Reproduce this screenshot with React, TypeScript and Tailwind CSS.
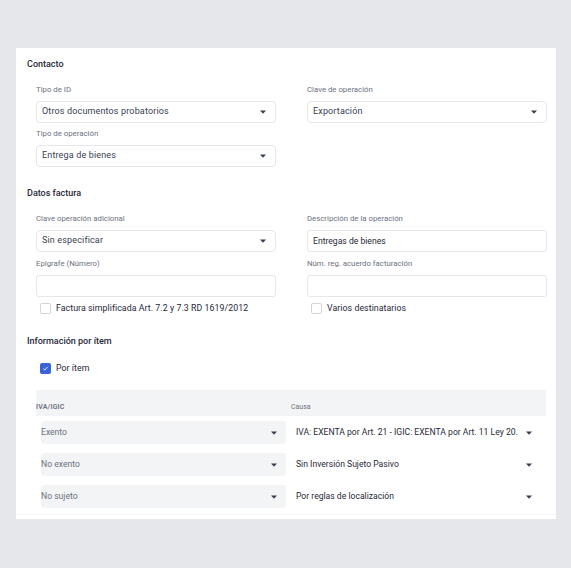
import React from 'react';

const font = { fontFamily: 'Roboto, "Liberation Sans", sans-serif' };

const Caret = () => (
  <svg width="6" height="4" viewBox="0 0 6 4" className="shrink-0">
    <path d="M0 0.5h6L3 3.8z" fill="#374151" />
  </svg>
);

const Label = ({ children }: { children: React.ReactNode }) => (
  <div className="h-[10px] leading-[10px] text-[7.8px] text-[#6b7280] mb-[6px]">{children}</div>
);

const Select = ({ value }: { value: string }) => (
  <div className="h-[22px] rounded-[4px] border border-[#e5e7eb] bg-white flex items-center justify-between pl-[5px] pr-[9px]">
    <span className="text-[9px] tracking-[0.15px] text-[#374151] truncate">{value}</span>
    <Caret />
  </div>
);

const Input = ({ value }: { value?: string }) => (
  <div className="h-[22px] rounded-[3px] border border-[#e5e7eb] bg-white flex items-center px-[5px]">
    <span className="text-[8.6px] text-[#1f2937]">{value}</span>
  </div>
);

const Field = ({ label, children }: { label: string; children: React.ReactNode }) => (
  <div className="flex flex-col">
    <Label>{label}</Label>
    {children}
  </div>
);

const Check = ({ label, checked }: { label: string; checked?: boolean }) => (
  <div className="flex items-center gap-[5px] pl-[4px] h-[11px]">
    {checked ? (
      <div className="w-[11px] h-[11px] rounded-[2px] bg-[#3b63d8] flex items-center justify-center">
        <svg width="7" height="7" viewBox="0 0 8 8">
          <path d="M1.5 4.2 3.2 5.8 6.5 2.2" stroke="white" strokeWidth="1" fill="none" />
        </svg>
      </div>
    ) : (
      <div className="w-[11px] h-[11px] rounded-[2px] border border-[#d1d5db] bg-white" />
    )}
    <span className="text-[8.8px] tracking-[0.05px] text-[#1f2937]">{label}</span>
  </div>
);

const rows = [
  { tipo: 'Exento', causa: 'IVA: EXENTA por Art. 21 - IGIC: EXENTA por Art. 11 Ley 20.' },
  { tipo: 'No exento', causa: 'Sin Inversión Sujeto Pasivo' },
  { tipo: 'No sujeto', causa: 'Por reglas de localización' },
];

export default function App() {
  return (
    <div className="w-[571px] h-[568px] bg-[#e5e7eb] pt-[48px] px-[16px]" style={font}>
      <div className="bg-white w-[540px] h-[471px] flex flex-col">
        <div className="pt-[10px] pl-[11px] pr-[9px] flex flex-col">
          <div className="h-[12px] leading-[12px] text-[9px] font-medium text-[#1f2937]">Contacto</div>

          <div className="pl-[9px] mt-[15px] grid grid-cols-[240px_240px] gap-x-[31px] gap-y-[6px]">
            <Field label="Tipo de ID"><Select value="Otros documentos probatorios" /></Field>
            <Field label="Clave de operación"><Select value="Exportación" /></Field>
            <Field label="Tipo de operación"><Select value="Entrega de bienes" /></Field>
            <div />
          </div>

          <div className="mt-[20px] h-[12px] leading-[12px] text-[9px] font-medium text-[#1f2937]">Datos factura</div>

          <div className="pl-[9px] mt-[15px] grid grid-cols-[240px_240px] gap-x-[31px] gap-y-[7px]">
            <Field label="Clave operación adicional"><Select value="Sin especificar" /></Field>
            <Field label="Descripción de la operación"><Input value="Entregas de bienes" /></Field>
            <Field label="Epígrafe (Número)"><Input /></Field>
            <Field label="Núm. reg. acuerdo facturación"><Input /></Field>
          </div>
          <div className="pl-[9px] mt-[6px] grid grid-cols-[240px_240px] gap-x-[31px]">
            <Check label="Factura simplificada Art. 7.2 y 7.3 RD 1619/2012" />
            <Check label="Varios destinatarios" />
          </div>

          <div className="mt-[21px] h-[12px] leading-[12px] text-[9px] font-medium text-[#1f2937]">Información por ítem</div>

          <div className="pl-[9px] mt-[16px]">
            <Check label="Por ítem" checked />
          </div>

          <div className="ml-[9px] mt-[16px] w-[510px]">
            <div className="h-[26px] bg-[#f3f4f6] grid grid-cols-[255px_1fr] items-end pb-[4px]">
              <span className="text-[7px] font-semibold uppercase text-[#6b7280] tracking-[0.2px]">IVA/IGIC</span>
              <span className="text-[7px] text-[#6b7280]">Causa</span>
            </div>
            <div className="flex flex-col gap-[9px] mt-[5px] pl-[5px] pr-[5px]">
              {rows.map((r) => (
                <div key={r.tipo} className="grid grid-cols-[245px_minmax(0,1fr)] gap-x-[5px] h-[23px]">
                  <div className="bg-[#f3f4f6] rounded-[4px] flex items-center justify-between pr-[9px]">
                    <span className="text-[8.6px] text-[#6b7280]">{r.tipo}</span>
                    <Caret />
                  </div>
                  <div className="min-w-0 flex items-center justify-between pl-[5px] pr-[9px] gap-[5px]">
                    <span className="min-w-0 text-[8.6px] text-[#1f2937] truncate">{r.causa}</span>
                    <Caret />
                  </div>
                </div>
              ))}
            </div>
          </div>
        </div>
        <div className="mt-[6px] border-t border-[#f3f4f6]" />
      </div>
    </div>
  );
}
